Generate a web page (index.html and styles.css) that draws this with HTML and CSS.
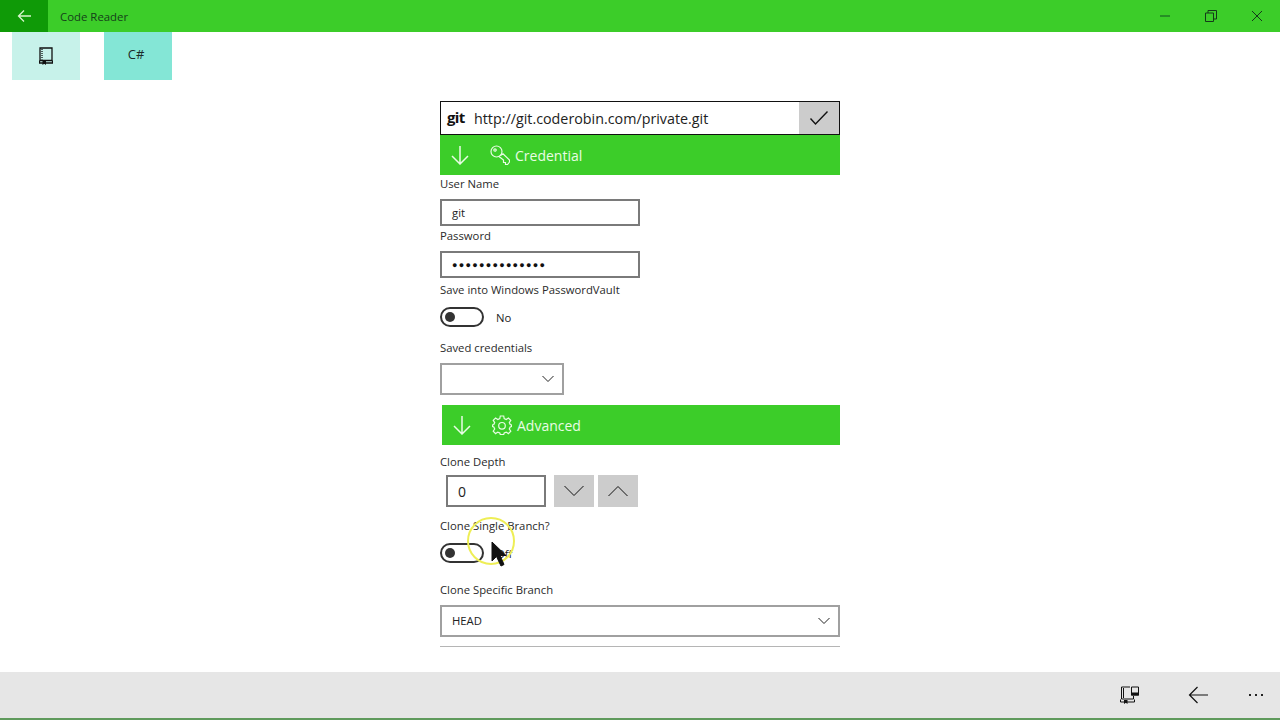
FILE: index.html
```html
<!DOCTYPE html>
<html lang="en">

<head>

    <meta charset="UTF-8">
    <meta name="viewport" content="width=device-width, initial-scale=1.0">
    <title>Code Reader</title>

    <link rel="stylesheet" href="styles.css">

</head>

<body>

    <div class="titlebar">
        <div class="back-btn">
            <svg width="16" height="16" viewBox="0 0 16 16"><path d="M8 2.500 2.500 8 8 13.500M2.500 8H15" /></svg>
        </div>
        <span class="app-title">Code Reader</span>
        <div class="window-btns">
            <svg width="12" height="12" viewBox="0 0 12 12"><path class="min-line" d="M1 6H11" /></svg>
            <svg width="12" height="12" viewBox="0 0 12 12"><path d="M.5 3H8.500V11.500H.5ZM3 3V.5H11.500V9H8.500" /></svg>
            <svg width="12" height="12" viewBox="0 0 12 12"><path d="M1 1 11 11M11 1 1 11" /></svg>
        </div>
    </div>

    <div class="tabs">
        <div class="tab tab-book">
            <svg width="14" height="18" viewBox="0 0 14 18"><path d="M1 13.500V1H13V13.500H1Z" /><path class="dotted" d="M3 2V12.500" /><path d="M.5 13.500V16H13.500V13.500" /><path class="fill" d="M3.500 14H7V18L5.250 16.800 3.500 18Z" /></svg>
        </div>
        <div class="tab tab-lang">C#</div>
    </div>

    <div class="main">
        <div class="column">

            <div class="url-bar">
                <span class="git-mark">git</span>
                <span class="url-text">http://git.coderobin.com/private.git</span>
                <div class="url-ok">
                    <svg width="20" height="16" viewBox="0 0 20 16"><path d="M1.500 8.500 6.500 14 18.500 1.500" /></svg>
                </div>
            </div>

            <div class="section-head">
                <svg class="head-arrow" width="20" height="20" viewBox="0 0 20 20"><path d="M10 1V19M2 11 10 19 18 11" /></svg>
                <svg class="head-icon" width="20" height="20" viewBox="0 0 20 20"><circle cx="6.500" cy="6.500" r="5.500" /><circle cx="5" cy="5" r="1.200" /><path d="M10.500 10.500 13 8.800 19.500 15 19.500 17 17.500 19.500 15.500 19.500 15.500 17.500 13.500 17.500 13.500 15 9 11.500" /></svg>
                <span>Credential</span>
            </div>

            <label class="field-label label-user">User Name</label>
            <div class="text-box small-box">git</div>

            <label class="field-label label-pass">Password</label>
            <div class="text-box small-box pass-dots">●●●●●●●●●●●●●●</div>

            <label class="field-label label-save">Save into Windows PasswordVault</label>
            <div class="toggle-row">
                <span class="toggle"><i></i></span>
                <span class="toggle-text">No</span>
            </div>

            <label class="field-label label-saved">Saved credentials</label>
            <div class="select saved-select">
                <span></span>
                <svg width="12" height="8" viewBox="0 0 12 8"><path d="M.5 1 6 6.500 11.500 1" /></svg>
            </div>

            <div class="section-head advanced-head">
                <svg class="head-arrow" width="20" height="20" viewBox="0 0 20 20"><path d="M10 1V19M2 11 10 19 18 11" /></svg>
                <svg class="head-icon" width="20" height="20" viewBox="0 0 20 20"><path d="M8.300 1H11.700L12.200 3.600 14.200 4.500 16.400 3 18.800 5.400 17.300 7.600 18.200 9.600 19.500 10V11.500L18.200 12 17.300 14 18.800 16.200 16.400 18.600 14.200 17.100 12.200 18 11.700 19.500H8.300L7.800 18 5.800 17.100 3.600 18.600 1.200 16.200 2.700 14 1.800 12 .5 11.500V10L1.800 9.600 2.700 7.600 1.200 5.400 3.600 3 5.800 4.500 7.800 3.600Z" /><circle cx="10" cy="10.800" r="3.300" /></svg>
                <span>Advanced</span>
            </div>

            <label class="field-label label-depth">Clone Depth</label>
            <div class="depth-row">
                <div class="text-box depth-box">0</div>
                <div class="depth-btn">
                    <svg width="20" height="12" viewBox="0 0 20 12"><path d="M.5 1 10 10.500 19.500 1" /></svg>
                </div>
                <div class="depth-btn">
                    <svg width="20" height="12" viewBox="0 0 20 12"><path d="M.5 11 10 1.500 19.500 11" /></svg>
                </div>
            </div>

            <label class="field-label label-single">Clone Single Branch?</label>
            <div class="toggle-row">
                <span class="toggle"><i></i></span>
                <span class="toggle-text">Off</span>
            </div>

            <label class="field-label label-branch">Clone Specific Branch</label>
            <div class="select branch-select">
                <span>HEAD</span>
                <svg width="12" height="8" viewBox="0 0 12 8"><path d="M.5 1 6 6.500 11.500 1" /></svg>
            </div>

            <div class="end-rule"></div>

        </div>
    </div>

    <div class="bottombar">
        <svg class="bar-book" width="20" height="18" viewBox="0 0 20 18"><path d="M1.500 13V1H10M1.500 13H13.500V10M3.500 2V12" /><path d="M.5 13.500V16H14.500V13.500" /><path d="M11.500 1H18.500V9H11.500Z" /><path class="fill" d="M4 14H7.500V18L5.750 16.800 4 18Z" /><path class="fill" d="M11 6.500H19V9.500H11Z" /></svg>
        <svg class="bar-back" width="20" height="18" viewBox="0 0 20 18"><path d="M9.500 1 1.500 9 9.500 17M1.500 9H20" /></svg>
        <div class="more-dots"><i></i><i></i><i></i></div>
    </div>
    <div class="bottom-line"></div>

    <!-- screen recorder's pointer, sits on top of the toggle -->
    <div class="cursor-ring"></div>
    <svg class="cursor" width="16" height="26" viewBox="0 0 16 26"><path d="M1 1V20L5.500 15.500 10 25 13 23.500 9 14.500H15Z" /></svg>

</body>

</html>
```

FILE: styles.css
```css
html,
body {
    width: 100%;
    height: 100%;
    margin: 0px;
    overflow: hidden;
}

body {
    background-color: #fff;
    color: #222;
    font-family: "Open Sans", "Noto Sans", sans-serif;
    font-size: 11.3px;
    display: flex;
    flex-direction: column;
    position: relative;
}

svg path,
svg circle {
    fill: none;
    stroke: currentColor;
    stroke-width: 1;
}

svg path.fill {
    fill: currentColor;
    stroke: none;
}

svg path.dotted {
    stroke-dasharray: 1 1;
}

.titlebar {
    height: 32px;
    flex: none;
    display: flex;
    align-items: center;
    background-color: #3ccd29;
    color: #15401a;
}

.back-btn {
    width: 48px;
    height: 32px;
    display: flex;
    align-items: center;
    justify-content: center;
    background-color: #0f9a07;
    color: #d6f5cc;
}

.back-btn svg path {
    stroke-width: 1.3;
}

.app-title {
    margin-left: 12px;
    font-size: 11.400px;
    flex: 1;
}

.window-btns {
    display: flex;
    gap: 34px;
    padding-right: 17px;
    color: #14391a;
}

.window-btns .min-line {
    stroke: #1f7a24;
    stroke-width: 1.5;
}

.tabs {
    height: 48px;
    flex: none;
    display: flex;
    gap: 24px;
    padding-left: 12px;
}

.tab {
    width: 68px;
    height: 48px;
    display: flex;
    align-items: center;
    justify-content: center;
    box-sizing: border-box;
    font-size: 13px;
    color: #1c2b2a;
}

.tab-book {
    background-color: #c7f2ea;
    color: #111;
}

.tab-book svg path {
    stroke-width: 1.3;
}

.tab-book svg path.fill {
    stroke-width: 0;
}

.tab-lang {
    background-color: #84e6d6;
    padding: 0 4px 5px 0;
}

.main {
    flex: 1;
    display: flex;
    justify-content: center;
    min-height: 0;
}

.column {
    width: 400px;
    padding-top: 21px;
    display: flex;
    flex-direction: column;
    align-items: flex-start;
}

.url-bar {
    width: 100%;
    height: 34px;
    box-sizing: border-box;
    border: 1px solid #111;
    display: flex;
    align-items: center;
    font-size: 14.300px;
    color: #222;
}

.git-mark {
    width: 33px;
    padding-left: 6px;
    box-sizing: border-box;
    font-size: 15px;
    font-weight: 700;
    letter-spacing: -0.7px;
    line-height: 20px;
    margin-bottom: 3px;
    color: #111;
}

.url-text {
    flex: 1;
}

.url-ok {
    width: 40px;
    height: 32px;
    display: flex;
    align-items: center;
    justify-content: center;
    background-color: #cccccc;
    color: #111;
}

.url-ok svg path {
    stroke-width: 1.4;
}

.section-head {
    width: 100%;
    height: 40px;
    flex: none;
    display: flex;
    align-items: center;
    background-color: #3ccd29;
    color: #e9fce5;
    font-size: 14px;
    box-sizing: border-box;
    padding-left: 10px;
}

.head-arrow {
    margin-right: 20px;
}

.head-arrow path {
    stroke-width: 1.5;
}

.head-icon {
    margin-right: 5px;
}

.head-icon path,
.head-icon circle {
    stroke-width: 1.2;
}

.advanced-head {
    width: 398px;
    margin-left: 2px;
    margin-top: 10px;
}

.field-label {
    display: block;
    height: 16px;
    line-height: 16px;
    color: #2a2a2a;
}

.label-user {
    margin-top: 1px;
    margin-bottom: 7px;
}

.label-pass {
    margin-top: 2px;
    margin-bottom: 7px;
}

.label-save {
    margin-top: 4px;
    margin-bottom: 9px;
}

.label-saved {
    margin-top: 13px;
    margin-bottom: 7px;
}

.label-depth {
    margin-top: 9px;
    margin-bottom: 5px;
}

.label-single {
    margin-top: 11px;
    margin-bottom: 9px;
}

.label-branch {
    margin-top: 19px;
    margin-bottom: 7px;
}

.text-box {
    box-sizing: border-box;
    border: 2px solid #7a7a7a;
    display: flex;
    align-items: center;
    padding-left: 10px;
    background-color: #fff;
}

.small-box {
    width: 200px;
    height: 27px;
    padding-bottom: 1px;
}

.pass-dots {
    font-size: 9px;
    letter-spacing: 1.300px;
    color: #111;
}

.toggle-row {
    display: flex;
    align-items: center;
    height: 20px;
}

.toggle {
    width: 44px;
    height: 20px;
    box-sizing: border-box;
    border: 2px solid #333;
    border-radius: 10px;
    display: flex;
    align-items: center;
    padding-left: 3px;
}

.toggle i {
    width: 10px;
    height: 10px;
    border-radius: 50%;
    background-color: #333;
}

.toggle-text {
    margin-left: 12px;
}

.select {
    box-sizing: border-box;
    border: 2px solid #a0a0a0;
    display: flex;
    align-items: center;
    justify-content: space-between;
    padding: 0 8px 1px 10px;
    color: #222;
}

.saved-select {
    width: 124px;
    height: 32px;
}

.branch-select {
    width: 400px;
    height: 32px;
}

.depth-row {
    display: flex;
    padding-left: 6px;
    gap: 4px;
}

.depth-box {
    width: 100px;
    height: 32px;
    font-size: 14px;
    margin-right: 4px;
}

.depth-btn {
    width: 40px;
    height: 32px;
    display: flex;
    align-items: center;
    justify-content: center;
    background-color: #cccccc;
    color: #111;
}

.end-rule {
    width: 100%;
    height: 1px;
    margin-top: 9px;
    background-color: #b5b5b5;
}

.bottombar {
    height: 45px;
    flex: none;
    display: flex;
    align-items: center;
    justify-content: flex-end;
    padding-right: 17px;
    padding-top: 1px;
    box-sizing: border-box;
    background-color: #e6e6e6;
    color: #111;
}

.bar-book {
    margin-right: 48px;
}

.bar-back {
    margin-right: 41px;
}

.bar-back path {
    stroke-width: 1.2;
}

.more-dots {
    display: flex;
    gap: 4px;
}

.more-dots i {
    width: 2px;
    height: 2px;
    background-color: #222;
}

.bottom-line {
    height: 3px;
    flex: none;
    background: linear-gradient(#e6e6e6 1px, #5f9a5c 1px);
}

.cursor-ring {
    position: absolute;
    left: 467px;
    top: 517px;
    width: 44px;
    height: 44px;
    border: 2px solid #eeee55;
    border-radius: 50%;
}

.cursor {
    position: absolute;
    left: 491px;
    top: 541px;
}

.cursor path {
    fill: #111;
    stroke: #111;
}
```
